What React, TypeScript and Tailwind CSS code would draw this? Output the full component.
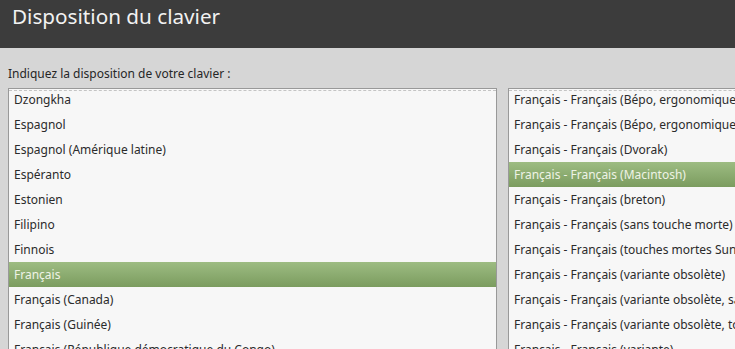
const left = [
  "Dzongkha",
  "Espagnol",
  "Espagnol (Amérique latine)",
  "Espéranto",
  "Estonien",
  "Filipino",
  "Finnois",
  "Français",
  "Français (Canada)",
  "Français (Guinée)",
  "Français (République démocratique du Congo)",
];

const right = [
  "Français - Français (Bépo, ergonomique, façon Dvorak)",
  "Français - Français (Bépo, ergonomique, façon Dvorak, Latin-9 uniquement)",
  "Français - Français (Dvorak)",
  "Français - Français (Macintosh)",
  "Français - Français (breton)",
  "Français - Français (sans touche morte)",
  "Français - Français (touches mortes Sun)",
  "Français - Français (variante obsolète)",
  "Français - Français (variante obsolète, sans touche morte)",
  "Français - Français (variante obsolète, touches mortes Sun)",
  "Français - Français (variante)",
];

function ListBox({ items, selected }: { items: string[]; selected: number }) {
  return (
    <div className="relative w-[489px] shrink-0 h-[300px] border border-[#999999] bg-[#f7f7f7] overflow-hidden">
      <div className="absolute left-0 right-0 top-[1px] border-t border-dashed border-[#c4c4c4]" />
      <ul className="-mt-[2px]">
        {items.map((it, i) => (
          <li
            key={it}
            className={
              i === selected
                ? "h-[25px] flex items-center pl-[5px] whitespace-nowrap bg-gradient-to-b from-[#9dbc82] to-[#7b9c5f] text-[#eef3e6]"
                : "h-[25px] flex items-center pl-[5px] whitespace-nowrap text-[#2b2b2b]"
            }
          >
            {it}
          </li>
        ))}
      </ul>
    </div>
  );
}

export default function App() {
  return (
    <div className="w-[735px] h-[349px] overflow-hidden bg-[#d6d6d6] text-[12px] font-['Noto_Sans',sans-serif]">
      <header className="h-[48px] bg-[#3c3c3c] px-[12px] pt-[2px]">
        <h1 className="text-[20.7px] leading-[28px] text-[#f2f2f2]">Disposition du clavier</h1>
      </header>
      <section className="px-[8px] pt-[16px]">
        <p className="text-[#262626] leading-[20px] mb-[4px]">Indiquez la disposition de votre clavier :</p>
        <div className="flex gap-[11px]">
          <ListBox items={left} selected={7} />
          <ListBox items={right} selected={3} />
        </div>
      </section>
    </div>
  );
}
